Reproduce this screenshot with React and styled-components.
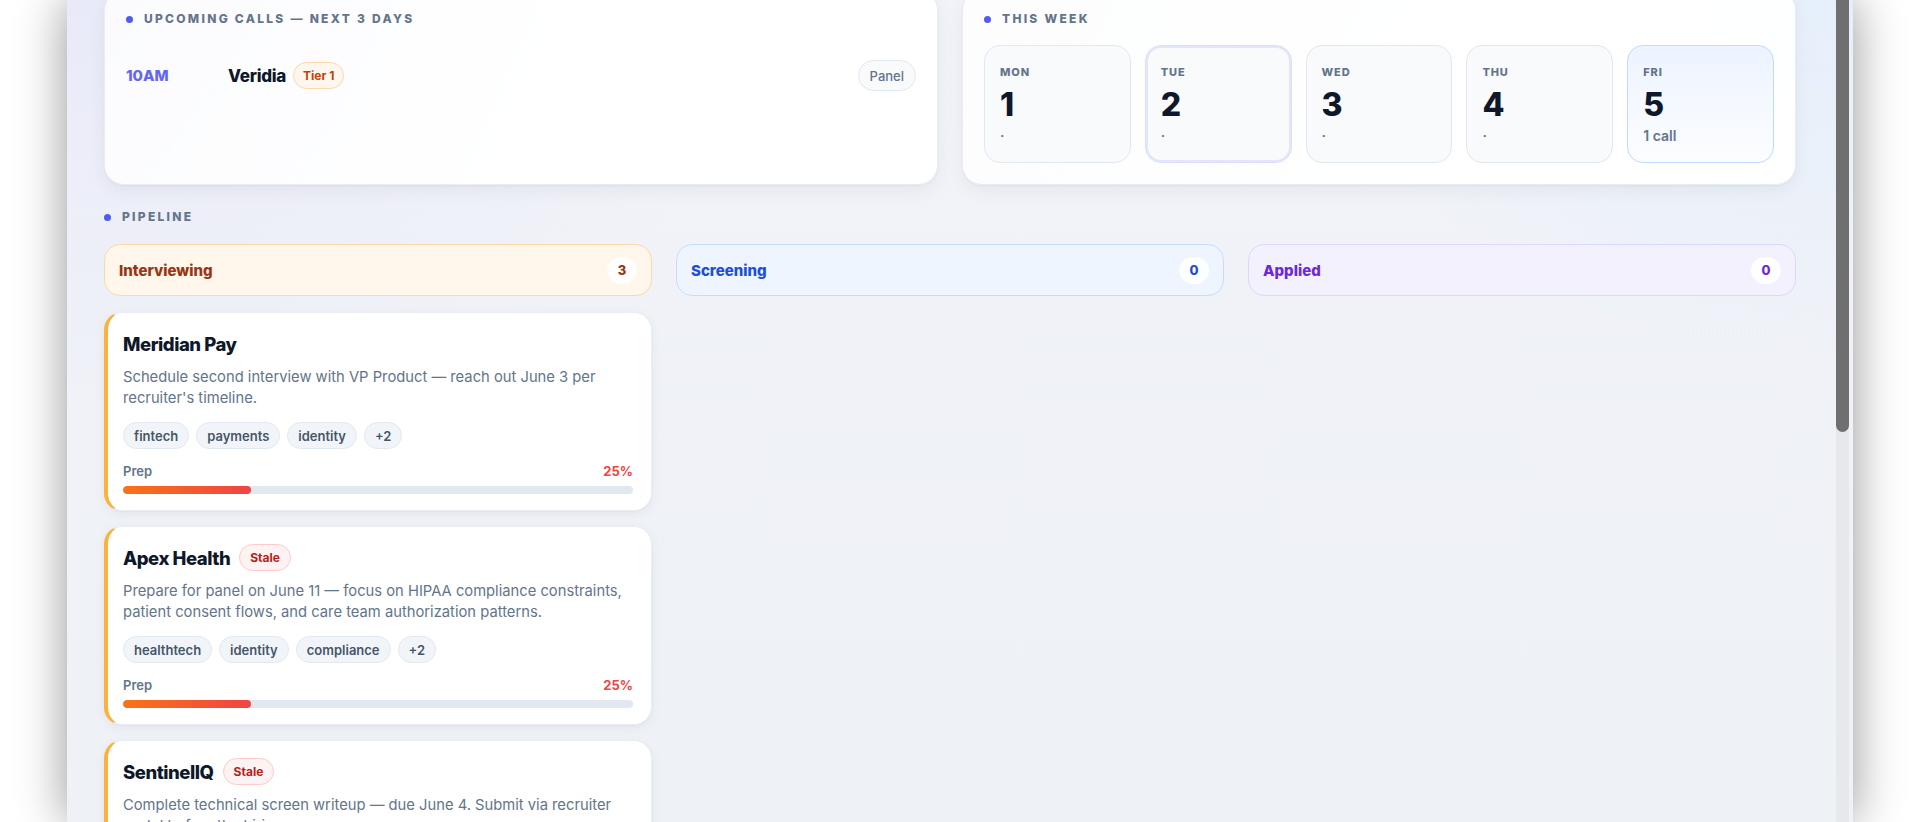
import React, { useLayoutEffect, useRef } from 'react'
import styled, { createGlobalStyle, css } from 'styled-components'

const GlobalStyle = createGlobalStyle`
  *, *::before, *::after { box-sizing: border-box; }
  html, body { margin: 0; height: 100%; }
  body {
    background: #ffffff;
    font-family: Inter, "Noto Sans", "Liberation Sans", sans-serif;
    color: #0f172a;
    overflow: hidden;
    -webkit-font-smoothing: antialiased;
  }
`;

const upcoming = [
    { time: '10AM', company: 'Veridia', tier: 'Tier 1', kind: 'Panel' },
];

const week = [
    { day: 'MON', date: 1, note: '·' },
    { day: 'TUE', date: 2, note: '·', today: true },
    { day: 'WED', date: 3, note: '·' },
    { day: 'THU', date: 4, note: '·' },
    { day: 'FRI', date: 5, note: '1 call', busy: true },
];

const tones = {
    orange: { bg: '#fff6ec', border: '#fdd8a8', text: '#9a3412' },
    blue: { bg: '#eff5ff', border: '#c7dcfd', text: '#1d4ed8' },
    violet: { bg: '#f4f1ff', border: '#ddd6fe', text: '#6d28d9' },
};

const columns = [
    {
        name: 'Interviewing',
        tone: 'orange',
        cards: [
            {
                company: 'Meridian Pay',
                note: "Schedule second interview with VP Product — reach out June 3 per recruiter's timeline.",
                tags: ['fintech', 'payments', 'identity', '+2'],
                prep: 25,
            },
            {
                company: 'Apex Health',
                stale: true,
                note: 'Prepare for panel on June 11 — focus on HIPAA compliance constraints, patient consent flows, and care team authorization patterns.',
                tags: ['healthtech', 'identity', 'compliance', '+2'],
                prep: 25,
            },
            {
                company: 'SentinelIQ',
                stale: true,
                note: 'Complete technical screen writeup — due June 4. Submit via recruiter portal before the hiring sync.',
                tags: ['security', 'platform', 'b2b', '+1'],
                prep: 40,
            },
        ],
    },
    { name: 'Screening', tone: 'blue', cards: [] },
    { name: 'Applied', tone: 'violet', cards: [] },
];

const App = () => {
    const scrollRef = useRef(null);

    useLayoutEffect(() => {
        if (scrollRef.current) scrollRef.current.scrollTop = 10;
    }, []);

    return (
        <>
            <GlobalStyle />
            <Stage>
                <Frame>
                    <Scroller ref={scrollRef}>
                        <Board>
                            <TopRow>
                                <Panel>
                                    <SectionLabel>Upcoming calls — next 3 days</SectionLabel>
                                    {upcoming.map((call) => (
                                        <CallRow key={call.company}>
                                            <CallTime>{call.time}</CallTime>
                                            <CallName>{call.company}</CallName>
                                            <TierBadge>{call.tier}</TierBadge>
                                            <KindBadge>{call.kind}</KindBadge>
                                        </CallRow>
                                    ))}
                                </Panel>
                                <Panel>
                                    <SectionLabel>This week</SectionLabel>
                                    <DayGrid>
                                        {week.map((d) => (
                                            <Day key={d.day} $today={d.today} $busy={d.busy}>
                                                <DayName>{d.day}</DayName>
                                                <DayNum>{d.date}</DayNum>
                                                <DayNote>{d.note}</DayNote>
                                            </Day>
                                        ))}
                                    </DayGrid>
                                </Panel>
                            </TopRow>

                            <PipelineLabel>Pipeline</PipelineLabel>
                            <Columns>
                                {columns.map((col) => (
                                    <Column key={col.name}>
                                        <ColumnHeader $tone={tones[col.tone]}>
                                            {col.name}
                                            <Count>{col.cards.length}</Count>
                                        </ColumnHeader>
                                        {col.cards.map((card) => (
                                            <Card key={card.company}>
                                                <TitleRow>
                                                    <Title>{card.company}</Title>
                                                    {card.stale && <StaleBadge>Stale</StaleBadge>}
                                                </TitleRow>
                                                <Note>{card.note}</Note>
                                                <Tags>
                                                    {card.tags.map((t) => (
                                                        <Tag key={t}>{t}</Tag>
                                                    ))}
                                                </Tags>
                                                <Meta>
                                                    <span>Prep</span>
                                                    <Pct>{card.prep}%</Pct>
                                                </Meta>
                                                <Bar>
                                                    <Fill style={{ width: `${card.prep}%` }} />
                                                </Bar>
                                            </Card>
                                        ))}
                                    </Column>
                                ))}
                            </Columns>
                        </Board>
                    </Scroller>
                    <Rail>
                        <Thumb />
                    </Rail>
                </Frame>
            </Stage>
        </>
    )
}

export default App

const Stage = styled.div`
    height: 100vh;
    padding: 0 67px;
    display: flex;
`;

const Frame = styled.div`
    flex: 1;
    min-width: 0;
    display: flex;
    padding-right: 4px;
    background:
        radial-gradient(ellipse 520px 360px at 100% 0%, #e5effb 0%, rgba(229, 239, 251, 0) 100%),
        radial-gradient(ellipse 700px 420px at 0% 0%, #e9eaf9 0%, rgba(233, 234, 249, 0) 100%),
        linear-gradient(180deg, #f1f3f8 0%, #eef1f6 100%);
    box-shadow: 0 0 46px rgba(0, 0, 0, 0.42);
`;

const Scroller = styled.div`
    flex: 1;
    min-width: 0;
    overflow: hidden;
`;

/* classic scrollbar drawn beside the board */
const Rail = styled.div`
    width: 13px;
    flex-shrink: 0;
    background: #e6e8eb;
`;

const Thumb = styled.div`
    height: 432px;
    background: #6f6f70;
    border-radius: 0 0 7px 7px;
`;

const Board = styled.main`
    padding: 0 40px 40px 37px;
`;

const TopRow = styled.div`
    display: grid;
    grid-template-columns: 1fr 1fr;
    gap: 24px;
`;

const Panel = styled.section`
    background: linear-gradient(115deg, rgba(255, 255, 255, 0.8) 0%, rgba(255, 255, 255, 0.96) 55%);
    border: 1px solid rgba(226, 232, 240, 0.8);
    border-radius: 20px;
    padding: 21px;
    box-shadow: 0 6px 18px rgba(15, 23, 42, 0.05), 0 1px 2px rgba(15, 23, 42, 0.04);
`;

const SectionLabel = styled.div`
    display: flex;
    align-items: center;
    gap: 11px;
    font-size: 12px;
    line-height: 14px;
    font-weight: 800;
    letter-spacing: 0.19em;
    text-transform: uppercase;
    color: #64748b;
    &::before {
        content: '';
        width: 7px;
        height: 7px;
        border-radius: 50%;
        background: #4f5bf3;
        flex-shrink: 0;
    }
`;

const PipelineLabel = styled(SectionLabel)`
    margin: 25px 0 20px;
`;

const CallRow = styled.div`
    display: flex;
    align-items: center;
    margin-top: 19px;
    padding: 15px 0;
`;

const CallTime = styled.span`
    width: 102px;
    flex-shrink: 0;
    font-size: 15px;
    font-weight: 800;
    color: #6366f1;
`;

const CallName = styled.span`
    font-size: 17px;
    font-weight: 800;
    letter-spacing: -0.015em;
    color: #0f172a;
`;

const Pill = styled.span`
    display: inline-flex;
    align-items: center;
    justify-content: center;
    border-radius: 999px;
    white-space: nowrap;
`;

const TierBadge = styled(Pill)`
    margin-left: 7px;
    height: 27px;
    padding: 0 9px;
    background: #fff7ed;
    border: 1px solid #fed7aa;
    color: #c2410c;
    font-size: 12px;
    font-weight: 700;
`;

const KindBadge = styled(Pill)`
    margin-left: auto;
    height: 31px;
    padding: 0 11px;
    background: #f8fafc;
    border: 1px solid #e2e8f0;
    color: #64748b;
    font-size: 13px;
    font-weight: 500;
`;

const DayGrid = styled.div`
    display: grid;
    grid-template-columns: repeat(5, 1fr);
    gap: 14px;
    margin-top: 19px;
`;

const Day = styled.div`
    border-radius: 16px;
    border: 1px solid #e2e8f0;
    background: #f8fafc;
    padding: 19px 15px 17px;
    ${(p) => p.$today && css`
        border-color: #dcdffa;
        box-shadow: inset 0 0 0 2px #e2e5fb;
    `}
    ${(p) => p.$busy && css`
        border-color: #bfdbfe;
        background: linear-gradient(180deg, #edf4ff 0%, #fcfdff 100%);
    `}
`;

const DayName = styled.div`
    font-size: 11px;
    line-height: 14px;
    font-weight: 800;
    letter-spacing: 0.08em;
    color: #64748b;
`;

const DayNum = styled.div`
    margin-top: 7px;
    font-size: 32px;
    line-height: 38px;
    font-weight: 800;
    color: #0f172a;
`;

const DayNote = styled.div`
    margin-top: 3px;
    font-size: 14px;
    line-height: 18px;
    font-weight: 600;
    color: #64748b;
`;

const Columns = styled.div`
    display: grid;
    grid-template-columns: repeat(3, 1fr);
    gap: 24px;
    align-items: start;
`;

const Column = styled.div`
    display: flex;
    flex-direction: column;
    gap: 15px;
`;

const ColumnHeader = styled.div`
    height: 52px;
    margin-bottom: 1px;
    display: flex;
    align-items: center;
    justify-content: space-between;
    padding: 0 14px;
    border-radius: 16px;
    border: 1px solid ${(p) => p.$tone.border};
    background: ${(p) => p.$tone.bg};
    color: ${(p) => p.$tone.text};
    font-size: 15px;
    font-weight: 800;
`;

const Count = styled.span`
    min-width: 30px;
    height: 27px;
    border-radius: 999px;
    background: rgba(255, 255, 255, 0.85);
    display: flex;
    align-items: center;
    justify-content: center;
    font-size: 13px;
    font-weight: 800;
`;

const Card = styled.article`
    background: #fff;
    border-radius: 18px;
    border: 1px solid #e9edf3;
    border-left: 4px solid #fbb13c;
    padding: 17px 18px 16px 15px;
    box-shadow: 0 3px 12px rgba(15, 23, 42, 0.05), 0 1px 2px rgba(15, 23, 42, 0.03);
`;

const TitleRow = styled.div`
    display: flex;
    align-items: center;
    gap: 9px;
    min-height: 27px;
`;

const Title = styled.h3`
    margin: 0;
    font-size: 18.5px;
    line-height: 24px;
    font-weight: 800;
    letter-spacing: -0.025em;
    color: #0f172a;
`;

const StaleBadge = styled(Pill)`
    height: 27px;
    padding: 0 10px;
    background: #fef2f2;
    border: 1px solid #fecaca;
    color: #b91c1c;
    font-size: 12px;
    font-weight: 700;
`;

const Note = styled.p`
    margin: 10px 0 0;
    font-size: 14.75px;
    line-height: 21px;
    color: #64748b;
`;

const Tags = styled.div`
    display: flex;
    flex-wrap: wrap;
    gap: 7px;
    margin-top: 13px;
`;

const Tag = styled(Pill)`
    height: 27px;
    padding: 0 10px;
    background: #f1f5f9;
    border: 1px solid #e2e8f0;
    color: #475569;
    font-size: 13px;
    font-weight: 600;
`;

const Meta = styled.div`
    display: flex;
    justify-content: space-between;
    margin-top: 14px;
    font-size: 13px;
    line-height: 16px;
    font-weight: 600;
    color: #64748b;
`;

const Pct = styled.span`
    font-weight: 700;
    color: #ef4444;
`;

const Bar = styled.div`
    margin-top: 7px;
    height: 8px;
    border-radius: 999px;
    background: #e2e8f0;
    overflow: hidden;
`;

const Fill = styled.div`
    height: 100%;
    border-radius: 999px;
    background: linear-gradient(90deg, #f97316 0%, #ef4444 100%);
`;
